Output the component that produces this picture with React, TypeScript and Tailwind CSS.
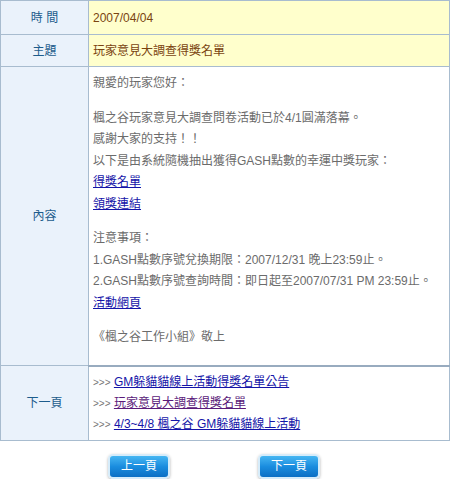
const font = { fontFamily: '"Liberation Sans", "Noto Sans CJK TC", sans-serif' };

function Label({ children }: { children: React.ReactNode }) {
  return (
    <td className="w-[88px] border border-[#a8bccf] bg-[#eaf2fb] text-center align-middle text-[12px] text-[#1d5c8c]">
      {children}
    </td>
  );
}

function Btn({ children }: { children: React.ReactNode }) {
  return (
    <button className="h-[25px] w-[62px] rounded-[5px] border-2 border-[#d6ecfa] bg-gradient-to-b from-[#45b6f2] via-[#1a8ddf] to-[#0b6fc4] text-[12px] text-white shadow-[0_1px_3px_rgba(0,0,0,0.3)]">
      {children}
    </button>
  );
}

export default function App() {
  const body = "text-[12px] leading-[21.5px] text-[#6b6b6b]";
  const link = "text-[#1414a8] underline";
  return (
    <div className="w-[453px] bg-white" style={font}>
      <table className="w-[450px] border-collapse">
        <tbody>
          <tr className="h-[34px]">
            <Label>時 間</Label>
            <td className="border border-[#a8bccf] bg-[#ffffcc] px-[4px] text-[12px] text-[#7a4410]">2007/04/04</td>
          </tr>
          <tr className="h-[32px]">
            <Label>主題</Label>
            <td className="border border-[#a8bccf] bg-[#ffffcc] px-[4px] text-[12px] text-[#7a4410]">玩家意見大調查得獎名單</td>
          </tr>
          <tr>
            <Label>內容</Label>
            <td className={`border border-[#a8bccf] border-b-2 border-b-[#98abbf] px-[4px] pt-[6px] pb-[16px] ${body}`}>
              <div>親愛的玩家您好：</div>
              <div className="h-[13px]" />
              <div>楓之谷玩家意見大調查問卷活動已於4/1圓滿落幕。</div>
              <div>感謝大家的支持！！</div>
              <div>以下是由系統隨機抽出獲得GASH點數的幸運中獎玩家：</div>
              <div><a className={link}>得獎名單</a></div>
              <div><a className={link}>領獎連結</a></div>
              <div className="h-[13px]" />
              <div>注意事項：</div>
              <div>1.GASH點數序號兌換期限：2007/12/31 晚上23:59止。</div>
              <div>2.GASH點數序號查詢時間：即日起至2007/07/31 PM 23:59止。</div>
              <div><a className={link}>活動網頁</a></div>
              <div className="h-[13px]" />
              <div>《楓之谷工作小組》敬上</div>
            </td>
          </tr>
          <tr>
            <Label>下一頁</Label>
            <td className="border border-[#a8bccf] px-[4px] py-[5px] text-[12px] leading-[21px]">
              <div><span className="text-[10px] text-[#777]">&gt;&gt;&gt;</span> <a className={link}>GM躲貓貓線上活動得獎名單公告</a></div>
              <div><span className="text-[10px] text-[#777]">&gt;&gt;&gt;</span> <a className="text-[#5a1a7a] underline">玩家意見大調查得獎名單</a></div>
              <div><span className="text-[10px] text-[#777]">&gt;&gt;&gt;</span> <a className={link}>4/3~4/8 楓之谷 GM躲貓貓線上活動</a></div>
            </td>
          </tr>
        </tbody>
      </table>
      <div className="flex gap-[88px] pl-[108px] pt-[13px]">
        <Btn>上一頁</Btn>
        <Btn>下一頁</Btn>
      </div>
    </div>
  );
}
